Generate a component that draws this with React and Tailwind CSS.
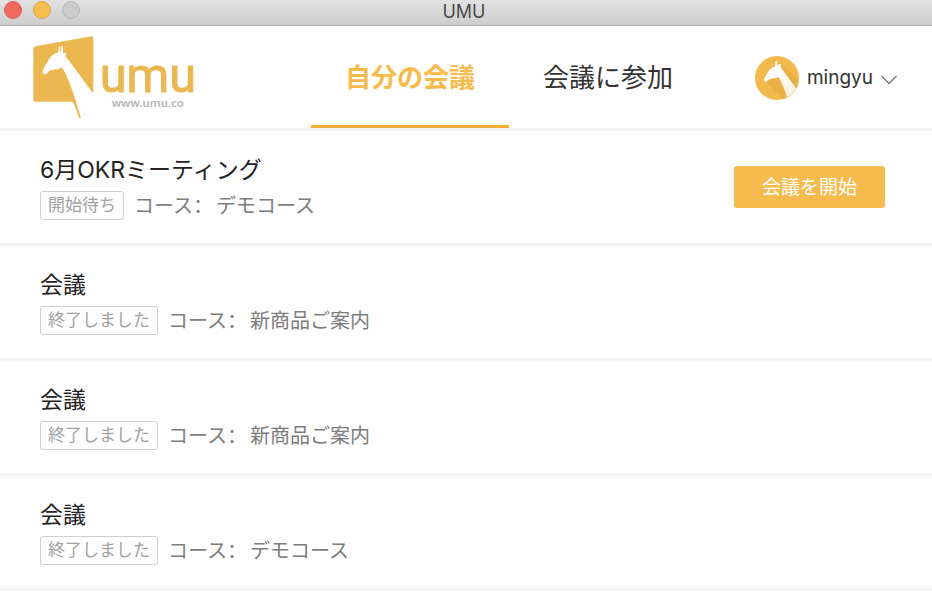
import React from "react";

const meetings = [
  { title: "6月OKRミーティング", status: "開始待ち", course: "デモコース", canStart: true },
  { title: "会議", status: "終了しました", course: "新商品ご案内" },
  { title: "会議", status: "終了しました", course: "新商品ご案内" },
  { title: "会議", status: "終了しました", course: "デモコース" },
];

function TitleBar() {
  return (
    <div className="grid h-[26px] grid-cols-[1fr_auto_1fr] items-start border-b border-[#adadad] bg-linear-to-b from-[#e2e2e2] to-[#cdcdcd] pr-1">
      <div className="flex gap-[11px] pt-px pl-1">
        <button type="button" aria-label="閉じる" className="size-[18px] rounded-full border border-[#db6259] bg-[#ee6a5f]" />
        <button type="button" aria-label="最小化" className="size-[18px] rounded-full border border-[#d9a649] bg-[#f5be4f]" />
        <button type="button" aria-label="拡大" className="size-[18px] rounded-full border border-[#b9b9b9] bg-[#cbcbcb]" />
      </div>
      <h1 className="text-lg leading-6 text-[#4c4c4c]">UMU</h1>
    </div>
  );
}

function Logo() {
  return (
    <svg className="mt-[9px] h-[84px] w-[164px] shrink-0 self-start" viewBox="99 105 492 252" role="img" aria-label="UMU">
      <path
        fill="#ebb750"
        d="M106 139 L274 109 Q280 108 280 114 V280 C262 258 240 226 223 203 C214 190 206 180 197 170 L197 156 L190 161 L188 139 L184 139 L182 157 L180 157 L181 140 L177 140 L174 158 C164 159 156 165 149 174 C142 186 133 199 128 212 Q127 222 136 223 C142 222 144 214 152 211 C164 207 176 211 185 201 C200 224 210 249 217 272 C226 297 234 325 243 353 H237 C232 337 227 321 220 308 Q218 305 214 305 H106 Q100 305 100 299 V146 Q100 140 106 139 Z"
      />
      <text x="299" y="276" fontSize="146" fill="#ebb750" stroke="#ebb750" strokeWidth="3" strokeLinejoin="round" fontFamily="Roboto, sans-serif">
        umu
      </text>
      <text x="335" y="321" fontSize="34" fontWeight="600" fill="#b7b7b7" fontFamily="'Noto Sans', sans-serif">
        www.umu.co
      </text>
    </svg>
  );
}

function Avatar() {
  return (
    <svg className="size-11" viewBox="106 45 132 132" aria-hidden="true">
      <defs>
        <clipPath id="avatar-clip">
          <circle cx="172" cy="111" r="66" />
        </clipPath>
        <linearGradient id="neck" x1="0" y1="0" x2="0" y2="1">
          <stop offset="0.3" stopColor="#ffffff" />
          <stop offset="1" stopColor="#fbe9cb" />
        </linearGradient>
      </defs>
      <g clipPath="url(#avatar-clip)">
        <rect x="106" y="45" width="132" height="132" fill="#f3b94c" />
        <path fill="#eab048" d="M177 60 L250 132 V190 H206 L137 123 L172 108 Z" />
        <path
          fill="url(#neck)"
          d="M168 60 L172 62 L174 76 L178 70 L183 69 L184 81 C199 100 216 124 232 146 L224 180 H205 C198 155 190 130 177 108 C168 113 158 111 149 115 C144 118 141 124 136 123 Q131 121 134 113 C141 99 149 80 166 77 Z"
        />
      </g>
    </svg>
  );
}

function Header() {
  return (
    <header className="flex h-[105px] items-stretch border-b-[3px] border-[#f3f3f3] pr-[35px] pl-[33px]">
      <Logo />
      <nav className="ml-[114px] flex text-[26px]">
        <a href="#mine" aria-current="page" className="flex w-[198px] items-center justify-center border-b-[3px] border-[#f9ac36] pt-1 font-bold text-[#f7bb4c]">
          自分の会議
        </a>
        <a href="#join" className="flex w-[198px] items-center justify-center border-b-[3px] border-transparent pt-1 text-[#333]">
          会議に参加
        </a>
      </nav>
      <button type="button" className="ml-auto flex items-center gap-2 pt-[2px] text-[19px] text-[#333]">
        <Avatar />
        mingyu
        <svg className="mt-1 h-[10px] w-4" viewBox="0 0 16 10" fill="none" stroke="#777" strokeWidth="1.3" aria-hidden="true">
          <path d="M0.5 1 L8 8.5 L15.5 1" />
        </svg>
      </button>
    </header>
  );
}

function MeetingRow({ title, status, course, canStart }) {
  return (
    <li className="flex items-center justify-between border-b-[3px] border-[#f3f3f3] pt-[23px] pr-[47px] pb-[23px] pl-10">
      <div>
        <h2 className="text-[23px] leading-8 text-[#222]">{title}</h2>
        <div className="mt-[5px] flex items-center gap-[10px]">
          <span className="rounded-[3px] border border-[#cfcfcf] px-[7px] text-[17px] leading-[27px] text-[#a2a2a2]">{status}</span>
          <p className="text-xl leading-7 text-[#7d7d7d]">
            コース<span className="mr-[3px] font-['Noto_Sans_CJK_SC',sans-serif]" lang="zh-CN">：</span>
            {course}
          </p>
        </div>
      </div>
      {canStart && (
        <button type="button" className="h-[42px] rounded-[3px] bg-[#f6bb4d] px-7 pt-[2px] text-[19px] text-white">
          会議を開始
        </button>
      )}
    </li>
  );
}

export default function App() {
  return (
    <div lang="ja" className="min-h-screen bg-[#fefefe] font-[Inter,'Noto_Sans_CJK_JP',sans-serif]">
      <TitleBar />
      <Header />
      <main>
        <ul>
          {meetings.map((meeting, index) => (
            <MeetingRow key={index} {...meeting} />
          ))}
        </ul>
      </main>
    </div>
  );
}
